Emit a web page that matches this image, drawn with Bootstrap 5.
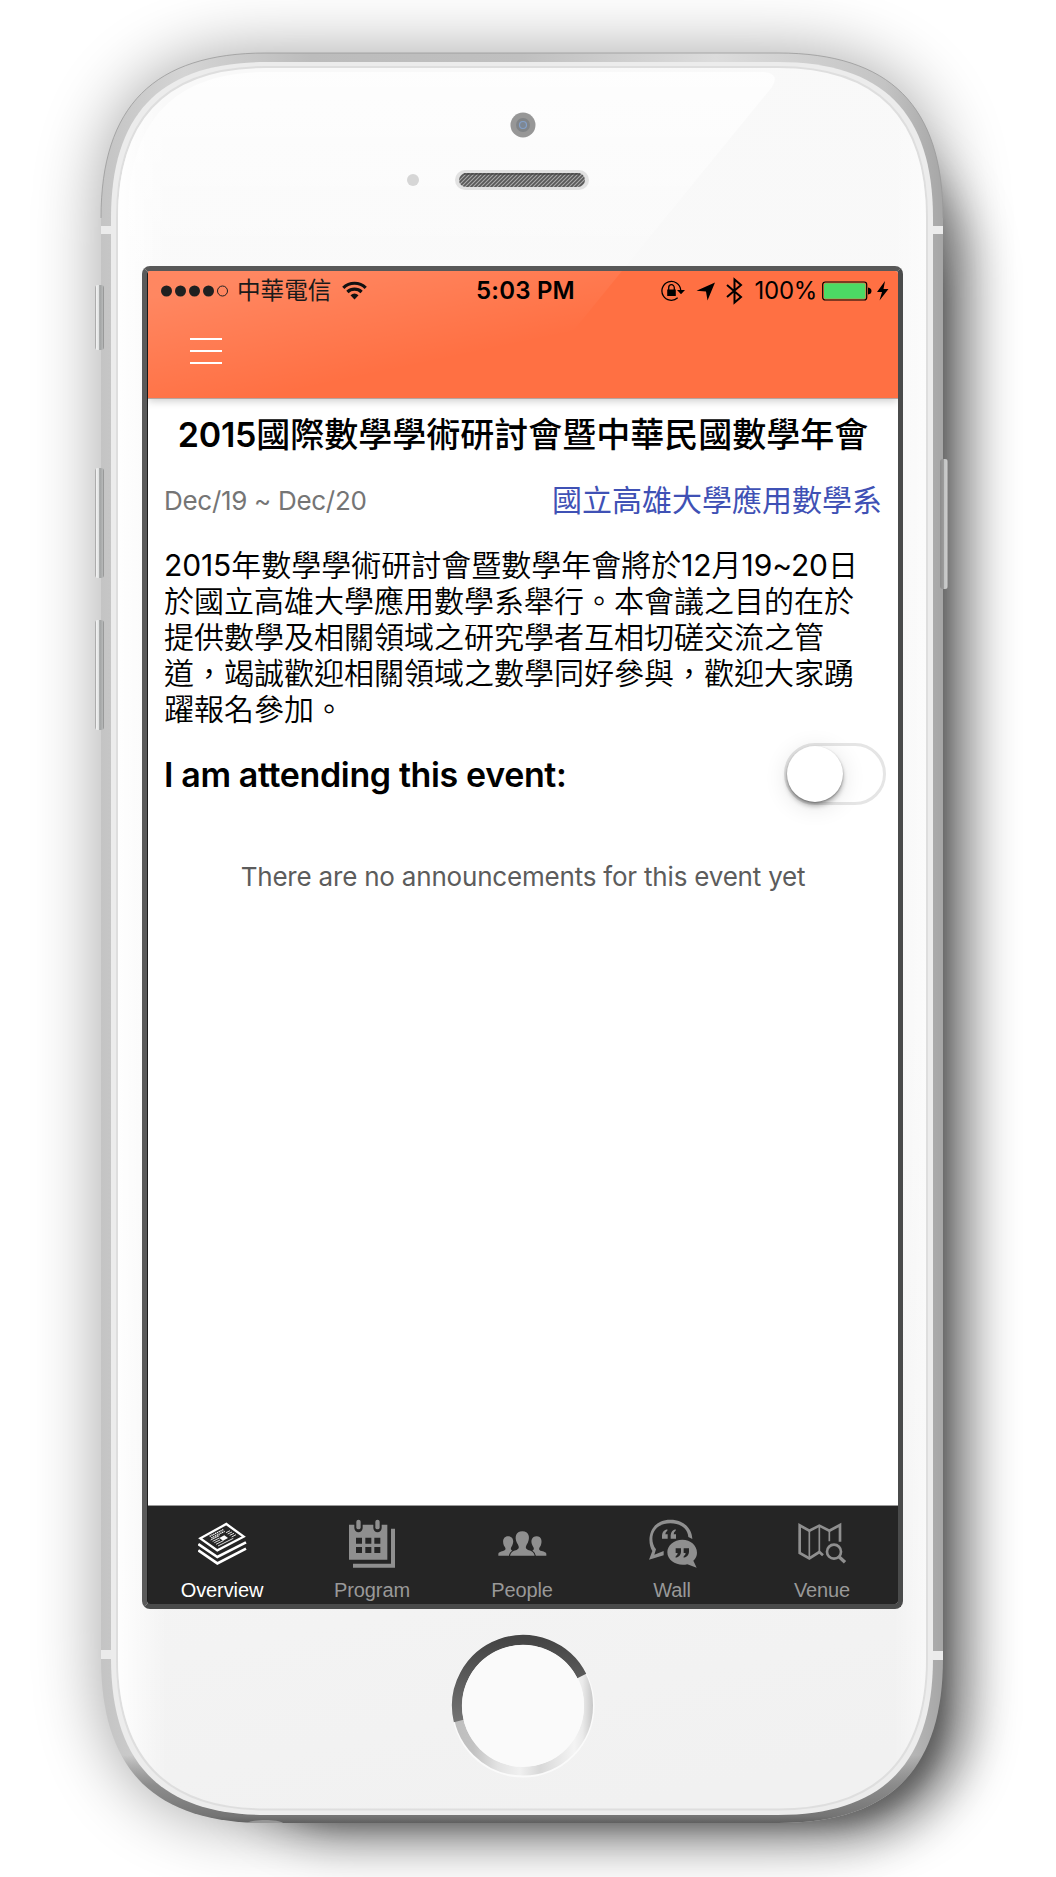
<!DOCTYPE html>
<html lang="zh-Hant">
<head>
<meta charset="utf-8">
<meta name="viewport" content="width=device-width, initial-scale=1">
<title>Event overview</title>
<link rel="stylesheet" href="https://cdn.jsdelivr.net/npm/bootstrap@5.3.0/dist/css/bootstrap.min.css">
<style>
body{font-family:Inter,"Noto Sans CJK TC",sans-serif;background:#fff;color:#000}
.stage{width:1056px;height:1877px;padding:266px 0 0 142px}
.art{left:0;top:0;pointer-events:none}
.screen{width:761px;height:1343px;border:5px solid #4a4b4b;border-top-color:#585858;border-left-color:#5a5a5a;border-radius:8px;background:#fff;box-shadow:inset 1px 0 #1d1d1d;padding-left:1px}
.appbar{height:128px;background:#ff7043;border-bottom:1px solid #b5a5a0;box-shadow:0 2px 8px rgba(0,0,0,.2)}
.status{height:40px;padding:0 8px 0 13px;font-size:24px;line-height:40px}
.carrier{font-size:23.6px;font-weight:400;color:#1a1a1a;margin-left:8px;margin-right:11px}
.clock{left:0;right:0;top:0;font-weight:600;letter-spacing:.2px;padding-left:5px}
.pct{letter-spacing:-.3px;margin:0 5px 0 10px}
.menu{margin:27px 0 0 42px;width:32px;gap:10px}
.menu i{height:2px;background:#fff}
.event{padding:0 16px}
.ttl{font-size:34px;font-weight:500;line-height:40px;margin:16px -10px 0;height:40px}
.ttl span{font-weight:600;letter-spacing:-.2px}
.meta{height:50px;margin-top:20px}
.date{font-size:26px;color:#757575;letter-spacing:-.3px}
.host{font-size:30px;color:#3f51b5;font-weight:400}
.desc{font-size:30px;line-height:36px;margin:22px -10px 0 0;height:180px;font-weight:350}
.desc span{letter-spacing:-.1px;font-weight:400}
.attend{height:64px;margin-top:15px}
.attend b{font-weight:600;font-size:34px;letter-spacing:-.37px;font-feature-settings:"calt" 0,"liga" 0}
.toggle{width:102px;height:62px;border:3px solid #e5e5e5;border-radius:31px;margin-right:-4px;background:#fff}
.knob{width:56px;height:56px;border-radius:50%;background:#fff;box-shadow:0 4px 5px rgba(0,0,0,.28),0 1px 2px rgba(0,0,0,.3),0 4px 24px rgba(0,0,0,.12)}
.none{font-size:26px;color:#5c5c5c;margin-top:51px;line-height:40px;letter-spacing:-.2px}
.tabs{height:99px;background:#252525;border-top:1px solid #9a9a9a;font-family:"Liberation Sans",Arial,sans-serif;font-size:20px;color:#999;fill:#8f8f8f;stroke:#8f8f8f}
.tabs .on{color:#fff;fill:#fff;stroke:#fff}
.tabs a{color:inherit;text-decoration:none;padding-top:13px}
.tabs svg{width:50px;height:50px}
.tabs em{font-style:normal;line-height:24px;margin:9px 2px 0 0;letter-spacing:-.1px}
</style>
<script src="https://cdn.jsdelivr.net/npm/bootstrap@5.3.0/dist/js/bootstrap.bundle.min.js"></script>
</head>
<body>
<div class="stage position-relative overflow-hidden">
<svg class="art position-absolute" width="1056" height="1877" viewBox="0 0 1056 1877">
<defs>
<filter id="b1" x="-20%" y="-20%" width="140%" height="140%"><feGaussianBlur stdDeviation="34"/></filter>
<filter id="b2" x="-20%" y="-20%" width="140%" height="140%"><feGaussianBlur stdDeviation="26"/></filter>
<filter id="b3" x="-20%" y="-20%" width="140%" height="140%"><feGaussianBlur stdDeviation="8"/></filter>
<linearGradient id="metal"><stop offset="0" stop-color="#c4c4c4"/><stop offset=".1" stop-color="#d4d4d4"/><stop offset=".25" stop-color="#bcbcbc"/><stop offset=".5" stop-color="#c0c0c0"/><stop offset=".73" stop-color="#dcdcdc"/><stop offset=".93" stop-color="#c4c4c4"/><stop offset="1" stop-color="#a6a6a6"/></linearGradient>
<linearGradient id="under" gradientUnits="userSpaceOnUse" x1="0" y1="1755" x2="0" y2="1823"><stop offset="0" stop-color="#707070" stop-opacity="0"/><stop offset=".45" stop-color="#858585" stop-opacity=".9"/><stop offset=".9" stop-color="#747474"/><stop offset="1" stop-color="#606060"/></linearGradient>
<linearGradient id="face" gradientUnits="userSpaceOnUse" x1="300" y1="70" x2="650" y2="1800"><stop offset="0" stop-color="#f9f9f9"/><stop offset=".6" stop-color="#f7f7f7"/><stop offset="1" stop-color="#f1f1f1"/></linearGradient>
<linearGradient id="side"><stop offset="0" stop-color="#fff" stop-opacity=".9"/><stop offset=".06" stop-color="#fff" stop-opacity="0"/><stop offset=".96" stop-color="#fff" stop-opacity="0"/><stop offset="1" stop-color="#fff" stop-opacity=".5"/></linearGradient>
<linearGradient id="gl" x1="0" y1="0" x2="0" y2="1"><stop offset="0" stop-color="#fff" stop-opacity=".8"/><stop offset="1" stop-color="#fff" stop-opacity=".15"/></linearGradient>
<linearGradient id="key"><stop offset="0" stop-color="#888"/><stop offset=".16" stop-color="#f0f0f0"/><stop offset=".4" stop-color="#e0e2e2"/><stop offset=".52" stop-color="#a0a2a2"/><stop offset=".85" stop-color="#b4b6b6"/><stop offset="1" stop-color="#888"/></linearGradient>
<linearGradient id="keyr"><stop offset="0" stop-color="#8c8c8c"/><stop offset=".45" stop-color="#9c9c9c"/><stop offset=".55" stop-color="#c2c4c4"/><stop offset=".85" stop-color="#ccc"/><stop offset="1" stop-color="#8c8c8c"/></linearGradient>
<linearGradient id="dark" x1="0" y1="0" x2="0" y2="1"><stop offset="0" stop-color="#454545"/><stop offset="1" stop-color="#737373"/></linearGradient>
<linearGradient id="light" gradientUnits="userSpaceOnUse" x1="452" y1="0" x2="594" y2="0"><stop offset="0" stop-color="#bdbdbd"/><stop offset=".15" stop-color="#c2c2c2"/><stop offset=".32" stop-color="#e2e2e2"/><stop offset=".48" stop-color="#f0f0f0"/><stop offset=".62" stop-color="#d8d8d8"/><stop offset=".86" stop-color="#f4f4f4"/><stop offset=".92" stop-color="#eaeaea"/><stop offset="1" stop-color="#c4c4c4"/></linearGradient>
<pattern id="mesh" width="4" height="4" patternUnits="userSpaceOnUse"><rect width="4" height="4" fill="#585858"/><path d="M-1 5L5-1M-1 1L1-1M3 5L5 3" stroke="#aaa" stroke-width="1.1"/></pattern>
<path id="body" d="M101 218C101 106 154 53 266 53H778C890 53 943 106 943 218V1658C943 1770 890 1823 778 1823H266C154 1823 101 1770 101 1658Z"/>
</defs>
<use href="#body" filter="url(#b1)" opacity=".36"/>
<rect x="225" y="150" width="741" height="1684" rx="120" filter="url(#b2)" opacity=".5"/>
<rect x="225" y="190" width="722" height="1638" rx="120" filter="url(#b3)" opacity=".16"/>
<use href="#body" fill="url(#metal)"/>
<use href="#body" fill="url(#under)"/>
<path d="M101 218C101 106 154 53 266 53H778C890 53 943 106 943 218" fill="none" stroke="#999" stroke-width=".8"/>
<path d="M247 1823C251 1819 279 1819 283 1823Z" fill="#969696"/>
<path d="M101 226h10v8h-10zM933 226h10v8h-10zM101 1650h10v9h-10zM933 1651h10v9h-10z" fill="#ebebeb"/>
<path d="M111 218C111 112 162 62 266 62H778C882 62 933 112 933 218V1658C933 1764 882 1815 778 1815H266C162 1815 111 1764 111 1658Z" fill="#ececec"/>
<path d="M117 218C117 117 167 67 266 67H778C877 67 927 117 927 218V1658C927 1759 877 1809.500 778 1809.500H266C167 1809.500 117 1759 117 1658Z" fill="url(#face)" stroke="#dedede" stroke-width="2"/>
<path d="M118 218C118 118 168 68 266 68H778C876 68 926 118 926 218V1658C926 1758 876 1808 778 1808H266C168 1808 118 1758 118 1658Z" fill="url(#side)"/>
<path d="M128 266V218C128 122 173 72 266 72H765Q780 74 772 87L626 266Z" fill="url(#gl)"/>
<rect x="95" y="285" width="9" height="65" rx="3" fill="url(#key)"/><rect x="95" y="468" width="9" height="110" rx="3" fill="url(#key)"/><rect x="95" y="620" width="9" height="110" rx="3" fill="url(#key)"/>
<rect x="940" y="459" width="8" height="130" rx="3" fill="url(#keyr)"/>
<circle cx="523" cy="125" r="12.500" fill="#979797"/><circle cx="523" cy="125" r="7" fill="#818487"/><circle cx="523" cy="125" r="3.500" fill="#7d8793" stroke="#84a0c8" stroke-width="1.200"/>
<circle cx="413" cy="180" r="6" fill="#d6d6d6"/>
<rect x="455" y="170" width="134" height="20" rx="10" fill="#e2e2e2"/><rect x="459" y="173" width="126" height="14" rx="7" fill="url(#mesh)"/><path d="M464 174H580" stroke="#454545" stroke-width="2" opacity=".6"/>
<circle cx="523" cy="1706" r="71.500" fill="#fafafa"/>
<circle cx="523" cy="1705.500" r="65.500" fill="none" stroke="url(#light)" stroke-width="9"/>
<path d="M458.700 1721A66 66 0 0 1 581.800 1676" fill="none" stroke="url(#dark)" stroke-width="10"/>
<circle cx="523" cy="1706" r="61" fill="#fafafa"/>
</svg>

<main class="screen position-relative d-flex flex-column overflow-hidden">
<header class="appbar position-relative flex-shrink-0">
<svg class="art position-absolute" width="750" height="127" viewBox="148 271 750 127"><defs><linearGradient id="sheen" gradientUnits="userSpaceOnUse" x1="300" y1="266" x2="325" y2="385"><stop offset="0" stop-color="#fff" stop-opacity=".16"/><stop offset="1" stop-color="#fff" stop-opacity="0"/></linearGradient></defs><path d="M144 266H626L517 400H144Z" fill="url(#sheen)"/></svg>
<div class="status d-flex align-items-center justify-content-between position-relative">
<div class="d-flex align-items-center">
<svg width="68" height="14" viewBox="0 0 68 14" fill="#202020"><circle cx="5.500" cy="7" r="5.500"/><circle cx="19.500" cy="7" r="5.500"/><circle cx="33.500" cy="7" r="5.500"/><circle cx="47.500" cy="7" r="5.500"/><circle cx="61.500" cy="7" r="5" fill="none" stroke="#202020"/></svg>
<span class="carrier">中華電信</span>
<svg width="25" height="20" viewBox="0 0 25 20" fill="none" stroke="#111" stroke-width="3.200"><path d="M1.300 6.800a16 16 0 0 1 22.400 0M5.400 11a10.200 10.200 0 0 1 14.200 0"/><path d="M8.500 14.200q4-3.200 8 0l-4 4.300z" fill="#111" stroke="none"/></svg>
</div>
<div class="clock position-absolute text-center">5:03 PM</div>
<div class="d-flex align-items-center">
<svg width="84" height="28" viewBox="0 0 84 28"><path d="M16.700 20.800a9.400 9.400 0 1 1 3-7.800" fill="none" stroke="#000" stroke-width="1.300"/><path d="M16 13h8l-4 4.200zM6.200 12.500h8.600v6.500H6.200z"/><path d="M7.700 13v-2.300a2.800 3 0 0 1 5.600 0V13" fill="none" stroke="#000" stroke-width="1.300"/><path d="M35.500 13.800L54 5.500 46.500 23.500 45 14.500z"/><path d="M66 8L80 20 73.500 25.500V2.500L80 8 66 20" fill="none" stroke="#000" stroke-width="2"/></svg>
<span class="pct">100%</span>
<svg width="68" height="22" viewBox="0 0 68 22"><rect x=".7" y="2" width="44" height="18" rx="2.500" fill="none" stroke="#000" stroke-width="1.200"/><rect x="2" y="3.300" width="41.400" height="15.400" rx="1.500" fill="#4cd964"/><path d="M46 7.500q3.500.5 3.500 3.500T46 14.500zM63 1L55 12h5L57.500 20.500 66.500 9h-5z"/></svg>
</div>
</div>
<div class="menu position-relative d-flex flex-column" role="button" aria-label="Menu"><i></i><i></i><i></i></div>
</header>
<section class="event flex-grow-1">
<h1 class="ttl text-center text-nowrap mb-0"><span>2015</span>國際數學學術研討會暨中華民國數學年會</h1>
<div class="meta d-flex align-items-center justify-content-between"><span class="date">Dec/19 ~ Dec/20</span><span class="host">國立高雄大學應用數學系</span></div>
<p class="desc mb-0 text-nowrap"><span>2015</span>年數學學術研討會暨數學年會將於<span>12</span>月<span>19~20</span>日<br>於國立高雄大學應用數學系舉行。本會議之目的在於<br>提供數學及相關領域之研究學者互相切磋交流之管<br>道，竭誠歡迎相關領域之數學同好參與，歡迎大家踴<br>躍報名參加。</p>
<div class="attend d-flex align-items-center justify-content-between"><b>I am attending this event:</b><div class="toggle" role="switch" aria-checked="false"><div class="knob"></div></div></div>
<p class="none text-center mb-0">There are no announcements for this event yet</p>
</section>
<nav class="tabs d-flex flex-shrink-0">
<a class="on col d-flex flex-column align-items-center" href="#"><svg viewBox="174 87 150 150"><g fill="none"><path d="M259 102L311 140 232 181 181 145Z" stroke-width="7"/><path d="M175 162L232 201 318 157M175 181L232 220 318 176" stroke-width="8"/><path d="M209 139L250 119M214 144L254 124" stroke-width="4" stroke-dasharray="4 2"/><path d="M212 150L238 137M218 154L238 144M223 158L240 150M228 163L250 152M234 168L280 145M258 128L270 122M263 132L276 126M269 136L282 130M275 141L288 134" stroke-width="2.500"/></g><path d="M238 144L253 136 264 144 249 152Z" stroke="none"/></svg><em>Overview</em></a>
<a class="col d-flex flex-column align-items-center" href="#"><svg viewBox="624 88 150 150" stroke="none"><path d="M627 105H742V210H627ZM753 117H765V234H639V222H753Z"/><path d="M643 100V115A12.500 12.500 0 0 0 668 115V100ZM700 100V115A12.500 12.500 0 0 0 725 115V100ZM648 144h18v18h-18zM676 144h18v18h-18zM703 144h18v18h-18zM648 172h18v18h-18zM676 172h18v18h-18zM703 172h18v18h-18z" fill="#252525"/><rect x="649" y="90" width="13" height="29" rx="6.500"/><rect x="706" y="90" width="13" height="29" rx="6.500"/></svg><em>Program</em></a>
<a class="col d-flex flex-column align-items-center" href="#"><svg viewBox="1073 88 150 150" stroke="none"><path d="M1103 140C1118 140 1122 154 1116 167C1110 177 1110 180 1116 183Q1108 188 1106 198H1074V192Q1075 187 1088 184C1100 181 1095 173 1091 168C1085 155 1089 140 1103 140Z"/><path d="M1189 140C1174 140 1170 154 1176 167C1182 177 1182 180 1176 183Q1184 188 1186 198H1218V192Q1217 187 1204 184C1192 181 1197 173 1201 168C1207 155 1203 140 1189 140Z"/><path d="M1146 125C1166 125 1170 143 1162 160C1155 171 1154 176 1163 181Q1181 185 1183 198H1109Q1111 185 1129 181C1138 176 1137 171 1130 160C1122 143 1126 125 1146 125Z" style="stroke:#252525;stroke-width:5;paint-order:stroke"/></svg><em>People</em></a>
<a class="col d-flex flex-column align-items-center" href="#"><svg viewBox="384 88 150 150" stroke="none"><path d="M387 210L397 184C378 154 388 90 451 90C495 90 516 120 517 148L505 142C503 116 481 101 451 101C396 101 386 151 408 179L403 195 431 184V197Z"/><path d="M487 150C512 150 531 167 531 189Q531 203 520 213L530 234 502 224C473 231 442 214 442 188C442 167 462 150 487 150Z"/><path d="M426 147V137Q427 122 442 119V123Q436 127 436 134H443V147ZM452 147V137Q453 122 467 119V123Q461 127 461 134H468V147Z"/><path d="M483 176V187Q482 201 467 204V200Q473 196 473 190H467V176ZM507 176V187Q506 201 491 204V200Q497 196 497 190H491V176Z" fill="#252525"/></svg><em>Wall</em></a>
<a class="col d-flex flex-column align-items-center" href="#"><svg viewBox="833 88 150 150" fill="none"><path d="M908 197L897 187 867 206 838 190V107L867 123 897 108 927 123 959 106V156" stroke-width="8"/><path d="M867 123V206M897 108V187M927 123V155" stroke-width="5"/><circle cx="941" cy="186" r="21" stroke-width="8"/><path d="M956 201L974 218" stroke-width="10"/></svg><em>Venue</em></a>
</nav>
</main>
</div>
</body>
</html>
